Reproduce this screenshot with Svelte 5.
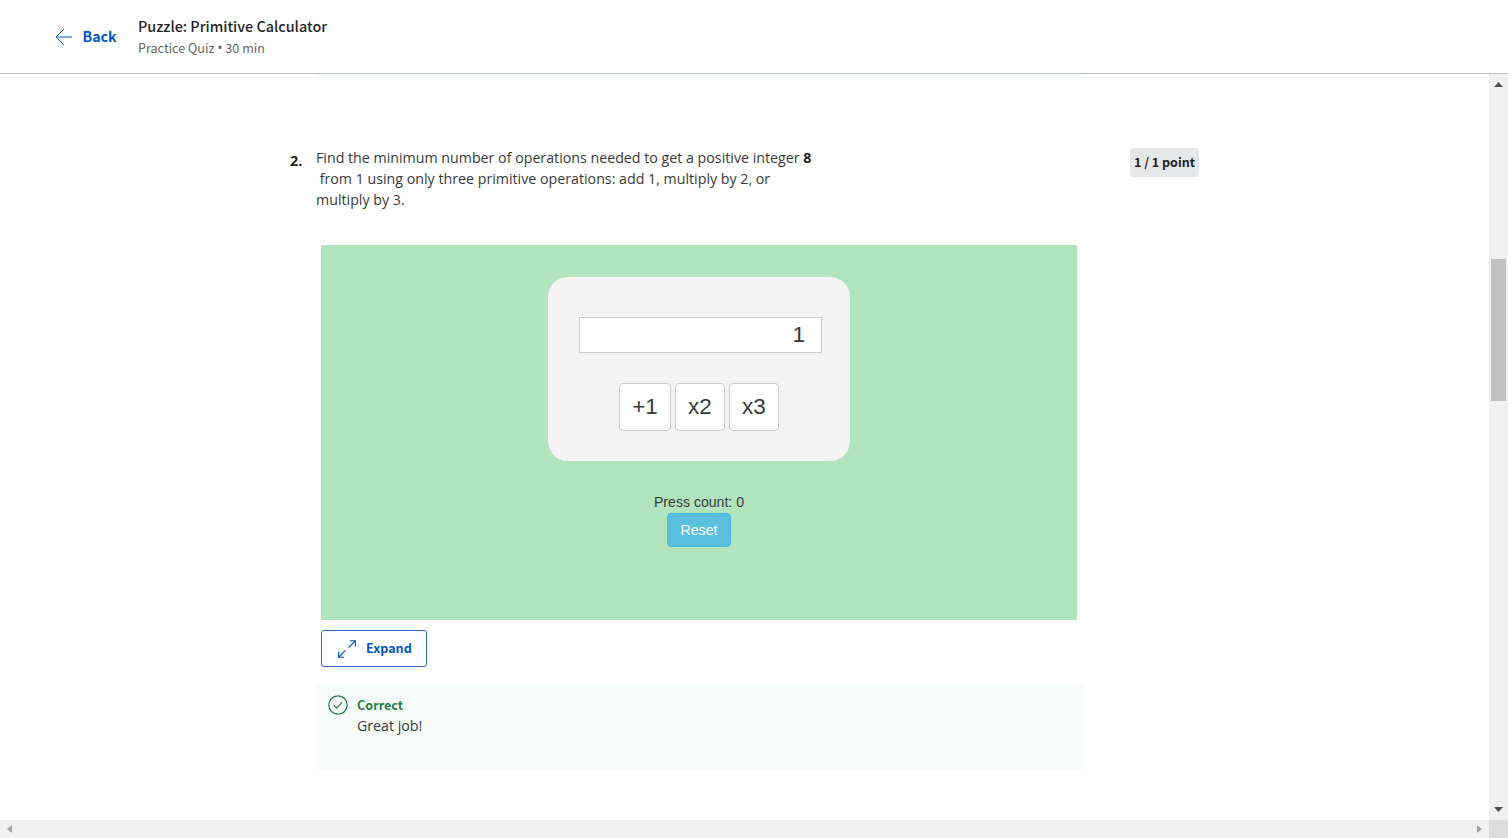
<script>
  let value = $state(1);
  let count = $state(0);

  const operations = [
    { label: '+1', apply: (n) => n + 1 },
    { label: 'x2', apply: (n) => n * 2 },
    { label: 'x3', apply: (n) => n * 3 }
  ];

  function press(operation) {
    value = operation.apply(value);
    count += 1;
  }

  function reset() {
    value = 1;
    count = 0;
  }
</script>

<div class="page">
  <header>
    <a class="back" href="#back">
      <svg width="18" height="18" viewBox="0 0 18 18" fill="none" stroke="currentColor">
        <path d="M17 9H1M9 1L1 9l8 8" />
      </svg>
      <span>Back</span>
    </a>
    <div class="heading">
      <h1>Puzzle: Primitive Calculator</h1>
      <p>Practice Quiz <i>•</i> 30 min</p>
    </div>
  </header>

  <div class="viewport">
    <main>
      <div class="previous"></div>
      <div class="question">
        <div class="number">2.</div>
        <p class="prompt">
          Find the minimum number of operations needed to get a positive integer <b>8</b><br />
          &nbsp;from 1 using only three primitive operations: add 1, multiply by 2, or<br />
          multiply by 3.
        </p>
        <div class="points">1 / 1 point</div>
      </div>

      <section class="puzzle">
        <div class="calculator">
          <div class="display">{value}</div>
          <div class="keys">
            {#each operations as operation}
              <button onclick={() => press(operation)}>{operation.label}</button>
            {/each}
          </div>
        </div>
        <div class="count">Press count: {count}</div>
        <button class="reset" onclick={reset}>Reset</button>
      </section>

      <button class="expand">
        <svg width="18" height="18" viewBox="0 0 18 18" fill="none" stroke="currentColor" stroke-width="1.1">
          <path d="M11.8 .8h5.6v5.6M17.2 1l-6.6 6.6M.6 11.6v5.6h5.6M.8 17l6.6-6.6" />
        </svg>
        <span>Expand</span>
      </button>

      <div class="feedback">
        <svg width="20" height="20" viewBox="0 0 20 20" fill="none" stroke="currentColor">
          <circle cx="10" cy="10" r="9.2" stroke-width="1.2" />
          <path d="M5.8 10.2l3 2.9 5.2-5.8" stroke-width="1.2" />
        </svg>
        <div>
          <strong>Correct</strong>
          <p>Great job!</p>
        </div>
      </div>
    </main>
    <div class="vbar">
      <svg width="9" height="5" viewBox="0 0 9 5"><path d="M0 5L4.5 0 9 5z" /></svg>
      <div class="thumb"></div>
      <svg class="down" width="9" height="5" viewBox="0 0 9 5"><path d="M0 0h9L4.5 5z" /></svg>
    </div>
  </div>
  <div class="hbar">
    <svg width="5" height="8" viewBox="0 0 5 8"><path d="M5 0v8L0 4z" /></svg>
    <svg class="right" width="5" height="8" viewBox="0 0 5 8"><path d="M0 0v8l5-4z" /></svg>
    <div class="corner"></div>
  </div>
</div>

<style>
  :global(body) {
    background: #fff;
    overflow: hidden;
  }
  .page {
    display: flex;
    flex-direction: column;
    width: 1508px;
    height: 838px;
    box-sizing: border-box;
    font-family: "Open Sans", sans-serif;
    color: #373a3c;
    white-space: nowrap;
  }
  h1, p {
    margin: 0;
  }
  button {
    display: block;
    box-sizing: border-box;
    padding: 0;
    margin: 0;
    cursor: pointer;
  }
  svg {
    display: block;
    flex: none;
  }
  header {
    display: flex;
    flex: none;
    box-sizing: border-box;
    height: 74px;
    border-bottom: 1px solid #bdbfc0;
    padding-left: 55px;
    font-family: "Noto Sans CJK SC", sans-serif;
  }
  .back {
    display: flex;
    align-items: center;
    width: 83px;
    height: 73px;
    gap: 9.5px;
    color: #0056c7;
    font-size: 14.2px;
    font-weight: 700;
    text-decoration: none;
  }
  .back span {
    padding-bottom: 1px;
  }
  .heading {
    padding-top: 16px;
  }
  h1 {
    font-size: 14.4px;
    line-height: 20px;
    padding-bottom: 1px;
    font-weight: 500;
    color: #1f1f1f;
  }
  .heading p {
    font-size: 12.6px;
    line-height: 21px;
    color: #666;
  }
  .heading i {
    font: 14px/1 "Open Sans", sans-serif;
  }
  .viewport {
    display: flex;
    flex: 1;
    min-height: 0;
  }
  main {
    flex: 1;
    padding-left: 316px;
  }
  .previous {
    width: 766px;
    height: 6px;
    background: #f6fbfa;
  }
  .question {
    display: flex;
    margin: 67px 0 0 -26px;
    height: 98px;
  }
  .number {
    width: 26px;
    padding-top: 3px;
    font-size: 14.4px;
    line-height: 21px;
    font-weight: 700;
    color: #1f1f1f;
  }
  .prompt {
    width: 814px;
    font-size: 14.23px;
    line-height: 21.2px;
  }
  .prompt b {
    color: #1f1f1f;
  }
  .points {
    width: 69px;
    height: 29px;
    margin-top: 1px;
    border-radius: 4px;
    background: #e5e7e8;
    color: #1f1f1f;
    font: 700 12.5px/27px "Noto Sans CJK SC", sans-serif;
    text-align: center;
  }
  .puzzle {
    display: flex;
    flex-direction: column;
    align-items: center;
    box-sizing: border-box;
    width: 756px;
    height: 375px;
    margin-left: 5px;
    padding-top: 32px;
    background: #b2e4bd;
    font-family: "Liberation Sans", sans-serif;
    color: #373a3c;
  }
  .calculator {
    box-sizing: border-box;
    width: 302px;
    height: 184px;
    padding: 40px 28px 0 31px;
    border-radius: 20px;
    background: #f4f4f4;
  }
  .display {
    box-sizing: border-box;
    height: 36px;
    padding-right: 16px;
    border: 1px solid #ccc;
    background: #fff;
    font-size: 22.5px;
    line-height: 34px;
    text-align: right;
  }
  .keys {
    display: flex;
    gap: 4px;
    margin: 30px 0 0 40px;
  }
  .keys button {
    width: 50px;
    height: 48px;
    border: 1px solid #ccc;
    border-radius: 4px;
    background: #fff;
    color: #373a3c;
    font: 22.5px "Liberation Sans", sans-serif;
  }
  .keys button:first-child {
    width: 52px;
  }
  .count {
    margin-top: 31px;
    padding-bottom: 1px;
    font-size: 14.1px;
    line-height: 20px;
  }
  .reset {
    width: 64px;
    height: 34px;
    padding-bottom: 1px;
    border: 1px solid #46b8da;
    border-radius: 4px;
    background: #5bc0de;
    color: #fff;
    font: 14.2px "Liberation Sans", sans-serif;
  }
  .expand {
    display: flex;
    align-items: center;
    gap: 10px;
    width: 106px;
    height: 37px;
    margin: 10px 0 0 5px;
    padding-left: 16px;
    border: 1px solid #2e68bb;
    border-radius: 3px;
    background: #fff;
    color: #0056c7;
    font: 700 12.6px "Noto Sans CJK SC", sans-serif;
  }
  .expand span {
    padding-bottom: 2px;
  }
  .feedback {
    display: flex;
    gap: 9px;
    box-sizing: border-box;
    width: 766px;
    height: 85px;
    margin-top: 17px;
    padding: 11px 12px;
    background: #f6fbfa;
    color: #1f7f46;
  }
  .feedback div {
    margin-top: -1px;
  }
  .feedback strong {
    display: block;
    font: 700 12.6px/21px "Noto Sans CJK SC", sans-serif;
  }
  .feedback p {
    font-size: 14.2px;
    line-height: 21px;
    color: #373a3c;
  }
  .vbar {
    display: flex;
    flex-direction: column;
    align-items: center;
    box-sizing: border-box;
    width: 19px;
    padding: 8px 0;
    background: #f1f1f1;
    fill: #505050;
  }
  .thumb {
    width: 15px;
    height: 142px;
    margin-top: 172px;
    background: #c1c1c1;
  }
  .down {
    margin-top: auto;
  }
  .hbar {
    display: flex;
    align-items: center;
    flex: none;
    height: 18px;
    padding-left: 7px;
    background: #f1f1f1;
    fill: #a3a3a3;
  }
  .right {
    margin: 0 7px 0 auto;
  }
  .corner {
    width: 19px;
    height: 18px;
    background: #dcdcdc;
  }
</style>
